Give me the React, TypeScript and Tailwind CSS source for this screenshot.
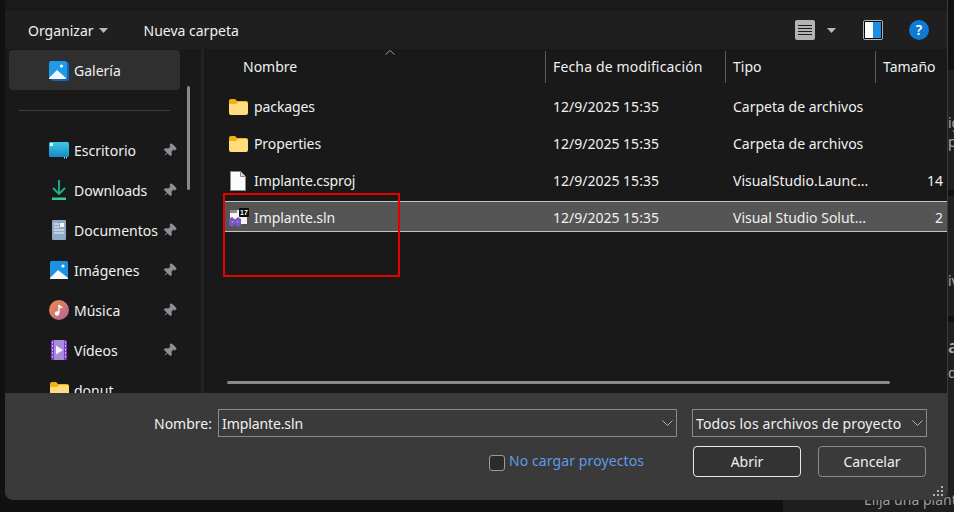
import React from 'react';
import { Pin } from 'lucide-react';

const Caret = () => (
  <svg width="9" height="5" viewBox="0 0 9 5" className="shrink-0">
    <path d="M0 0h9L4.5 5z" fill="#b8b8b8" />
  </svg>
);

const Chevron = () => (
  <svg width="11" height="6" viewBox="0 0 11 6" className="shrink-0">
    <path d="M.5.5l5 5 5-5" fill="none" stroke="#b5b5b5" />
  </svg>
);

const FolderIcon = () => (
  <svg width="19" height="16" viewBox="0 0 19 16">
    <path d="M0 2q0-2 2-2h4l2 2h9q2 0 2 2v2H0z" fill="#f4b20e" />
    <path d="M0 5h7l2-2h8q2 0 2 2v9q0 2-2 2H2q-2 0-2-2z" fill="#ffdc7d" />
  </svg>
);

const GalleryIcon = () => (
  <svg width="20" height="20" viewBox="0 0 20 20">
    <rect x="2" y="1" width="18" height="19" rx="2" fill="#1565b8" />
    <rect x="0" y="0" width="18" height="18" rx="2" fill="#1e9be8" />
    <path d="M0 17l8-8 9 8v1H0z" fill="#f2f6fa" />
    <circle cx="12.5" cy="5" r="1.6" fill="#fff" />
  </svg>
);

const DesktopIcon = () => (
  <svg width="20" height="17" viewBox="0 0 20 17">
    <defs>
      <linearGradient id="desk" x1="0" y1="0" x2="0" y2="1">
        <stop offset="0" stopColor="#43c6e8" />
        <stop offset="1" stopColor="#128cc4" />
      </linearGradient>
    </defs>
    <rect width="20" height="15" y="0" rx="1.5" fill="url(#desk)" />
    <rect x="1" y="1" width="3" height="3" fill="#e8fbff" />
    <rect x="15" y="15" width="1" height="1.5" fill="#9fdcec" />
    <rect x="17" y="15" width="1" height="1.5" fill="#9fdcec" />
  </svg>
);

const DownloadIcon = () => (
  <svg width="16" height="20" viewBox="0 0 16 20">
    <path d="M8 0v13M2 8l6 6 6-6" fill="none" stroke="#1fb58f" strokeWidth="1.8" />
    <rect x="1" y="17.5" width="14" height="2.5" fill="#36c9a0" />
  </svg>
);

const DocumentIcon = () => (
  <svg width="14" height="20" viewBox="0 0 14 20">
    <rect width="14" height="20" rx="1" fill="#8fa9c6" />
    <path d="M2 4h5M2 7h5M2 10h10M2 13h10" stroke="#f4f7fa" strokeWidth="1" />
    <rect x="8" y="3" width="4" height="4" fill="#f4f7fa" />
  </svg>
);

const PicturesIcon = () => (
  <svg width="18" height="18" viewBox="0 0 18 18">
    <rect width="18" height="18" rx="1.5" fill="#1b93e4" />
    <path d="M0 17l8-8 10 8v1H0z" fill="#f4f7fb" />
    <circle cx="13" cy="5" r="1.6" fill="#fff" />
  </svg>
);

const MusicIcon = () => (
  <svg width="20" height="20" viewBox="0 0 20 20">
    <defs>
      <linearGradient id="mus" x1="0" y1="0" x2="1" y2="1">
        <stop offset="0" stopColor="#ef8f45" />
        <stop offset="1" stopColor="#b25f9e" />
      </linearGradient>
    </defs>
    <circle cx="10" cy="10" r="10" fill="url(#mus)" />
    <path d="M10 5v8" stroke="#fff" strokeWidth="1.4" />
    <path d="M10 5q1 2.5 3.5 2.5" fill="none" stroke="#fff" strokeWidth="1.4" />
    <circle cx="8" cy="13.5" r="2.2" fill="#fff" />
  </svg>
);

const VideoIcon = () => (
  <svg width="16" height="20" viewBox="0 0 16 20">
    <rect width="16" height="20" rx="1.5" fill="#7d3fc8" />
    <rect x="3" y="0" width="10" height="20" fill="#a88bdc" />
    <path d="M5 5.5l7 4.5-7 4.5z" fill="#f4f0fb" />
    <path d="M1 2.5h1M1 6h1M1 9.5h1M1 13h1M1 16.500h1M14 2.500h1M14 6h1M14 9.500h1M14 13h1M14 16.500h1" stroke="#e4d8f6" strokeWidth="1.500" />
  </svg>
);

const FileIcon = () => (
  <svg width="16" height="20" viewBox="0 0 16 20" className="ml-[1px]">
    <path d="M.5.5h10l5 5v14H.5z" fill="#fbfbfb" stroke="#8a8a8a" />
    <path d="M10.500.5v5h5" fill="#d8d8d8" stroke="#8a8a8a" />
  </svg>
);

const SolutionIcon = () => (
  <svg width="20" height="20" viewBox="0 0 20 20">
    <rect x="1" y="2" width="17" height="14" fill="#f4f4f4" />
    <rect x="1" y="2" width="7" height="3" fill="#8a8a8a" />
    <path d="M0 11l3-2 3 2.500 3-2.500 3 2v6l-3 2-3-2.500-3 2.500-3-2z" fill="#7a55c4" />
    <circle cx="3.500" cy="14" r="1" fill="#a58fe0" />
    <circle cx="8.500" cy="14" r="1" fill="#a58fe0" />
    <rect x="10" y="0" width="10" height="9" rx="1" fill="#0a0a0a" />
    <text x="15" y="7" textAnchor="middle" fontSize="7" fontWeight="700" fill="#fff" fontFamily="Liberation Sans, sans-serif">17</text>
  </svg>
);

const PinIcon = () => (
  <Pin size={15} className="rotate-45 text-[#8b9196]" fill="currentColor" strokeWidth={1.5} />
);

const ViewIcon = () => (
  <svg width="20" height="20" viewBox="0 0 20 20">
    <rect width="20" height="20" rx="2" fill="#b3b3b3" />
    <path d="M3 5.500h14M3 8.500h14M3 11.500h14M3 14.500h14" stroke="#1c1c1c" strokeWidth="1" />
  </svg>
);

const PreviewIcon = () => (
  <svg width="20" height="20" viewBox="0 0 20 20">
    <rect x=".5" y=".5" width="19" height="19" rx="1.500" fill="#000" stroke="#b3b3b3" />
    <rect x="2" y="2" width="8" height="16" fill="#fff" />
    <rect x="10" y="2" width="8" height="16" fill="#1b8fe6" />
  </svg>
);

const HelpIcon = () => (
  <div className="flex h-5 w-5 items-center justify-center rounded-full bg-[#0f7ad6] text-[14px] font-semibold leading-none text-white">?</div>
);

const Grip = () => (
  <svg width="11" height="11" viewBox="0 0 11 11" className="absolute bottom-[3px] right-[3px]">
    <path d="M8 0h2v2H8zM4 4h2v2H4zM8 4h2v2H8zM0 8h2v2H0zM4 8h2v2H4zM8 8h2v2H8z" fill="#b0b0b0" />
  </svg>
);

const navItems = [
  { label: 'Escritorio', icon: <DesktopIcon />, pinned: true },
  { label: 'Downloads', icon: <DownloadIcon />, pinned: true },
  { label: 'Documentos', icon: <DocumentIcon />, pinned: true },
  { label: 'Imágenes', icon: <PicturesIcon />, pinned: true },
  { label: 'Música', icon: <MusicIcon />, pinned: true },
  { label: 'Vídeos', icon: <VideoIcon />, pinned: true },
  { label: 'donut', icon: <FolderIcon />, pinned: false },
];

const files = [
  { name: 'packages', date: '12/9/2025 15:35', type: 'Carpeta de archivos', size: '', icon: <FolderIcon /> },
  { name: 'Properties', date: '12/9/2025 15:35', type: 'Carpeta de archivos', size: '', icon: <FolderIcon /> },
  { name: 'Implante.csproj', date: '12/9/2025 15:35', type: 'VisualStudio.Launc...', size: '14', icon: <FileIcon /> },
  { name: 'Implante.sln', date: '12/9/2025 15:35', type: 'Visual Studio Solut...', size: '2', icon: <SolutionIcon />, selected: true },
];

const NavRow = ({ label, icon, pinned }: { label: string; icon: React.ReactNode; pinned: boolean }) => (
  <div className="flex h-10 shrink-0 items-center pl-[44px]">
    <div className="flex w-[25px] shrink-0 justify-center pr-[5px]">{icon}</div>
    <span className="w-[88px] shrink-0 whitespace-nowrap">{label}</span>
    {pinned && <PinIcon />}
  </div>
);

const FileRow = ({ file }: { file: (typeof files)[number] }) => (
  <div
    className={`grid h-[31px] shrink-0 grid-cols-[329px_180px_150px_1fr] items-center border-y pt-[2px] ${
      file.selected ? 'border-[#c4c4c4] bg-[#555555]' : 'border-transparent'
    }`}
  >
    <div className="flex items-center pl-[5px]">
      <div className="flex w-[25px] shrink-0 justify-start">{file.icon}</div>
      <span className="tracking-[-0.1px]">{file.name}</span>
    </div>
    <span>{file.date}</span>
    <span className="whitespace-nowrap">{file.type}</span>
    <span className="pr-[4px] text-right">{file.size}</span>
  </div>
);

const App: React.FC = () => {
  return (
    <div className="flex h-[512px] w-[954px] flex-col overflow-hidden bg-[#111111] font-['Noto_Sans',sans-serif] text-[14px] text-[#f0f0f0]">
      <div className="flex h-[500px] shrink-0 pl-[5px]">
        {/* dialogo */}
        <div className="relative z-10 flex w-[943px] flex-col overflow-hidden rounded-b-lg border-r border-[#3c3c3c] bg-[#191919]">
          <div className="h-[11px] shrink-0 bg-[#1a1a1a]" />
          <div className="flex h-[38px] shrink-0 items-center bg-[#1f1f1f] pl-[23px] pr-[18px]">
            <span>Organizar</span>
            <div className="ml-[5px]"><Caret /></div>
            <span className="ml-[36px]">Nueva carpeta</span>
            <div className="ml-auto"><ViewIcon /></div>
            <div className="ml-[12px]"><Caret /></div>
            <div className="ml-[27px]"><PreviewIcon /></div>
            <div className="ml-[26px]"><HelpIcon /></div>
          </div>

          <div className="flex min-h-0 flex-1">
            <aside className="relative flex w-[199px] shrink-0 flex-col overflow-hidden border-r-[3px] border-[#232323] pl-[4px] pr-[21px]">
              <div className="mt-px flex h-10 shrink-0 items-center rounded bg-[#2f2f2f] pl-[40px] pt-px">
                <GalleryIcon />
                <span className="ml-[5px]">Galería</span>
              </div>
              <div className="ml-[10px] mr-[10px] mt-[20px] h-px shrink-0 bg-[#3d3d3d]" />
              <div className="-ml-[4px] -mr-[21px] mt-[19px] flex flex-col">
                {navItems.map((item) => (
                  <NavRow key={item.label} {...item} />
                ))}
              </div>
              <div className="absolute right-[11px] top-[37px] h-[104px] w-[3px] rounded bg-[#8a8a8a]" />
            </aside>

            <main className="flex min-w-0 flex-1 flex-col pl-[19px]">
              <div className="relative grid h-[36px] shrink-0 grid-cols-[322px_180px_150px_1fr] items-center pb-[1px]">
                <div className="pl-[20px]">Nombre</div>
                <div className="flex h-[32px] items-center whitespace-nowrap border-l border-[#5c5c5c] pl-[7px] tracking-[0.15px]">Fecha de modificación</div>
                <div className="flex h-[32px] items-center border-l border-[#5c5c5c] pl-[7px]">Tipo</div>
                <div className="flex h-[32px] items-center border-l border-[#5c5c5c] pl-[7px]">Tamaño</div>
                <svg width="10" height="5" viewBox="0 0 10 5" className="absolute left-[162px] top-[1px]">
                  <path d="M.5 4.500l4.500-4 4.500 4" fill="none" stroke="#9a9a9a" />
                </svg>
              </div>
              <div className="mt-[5px] flex flex-col gap-[6px] pl-[1px]">
                {files.map((file) => (
                  <FileRow key={file.name} file={file} />
                ))}
              </div>
              <div className="ml-[4px] mr-[57px] mt-[149px] h-[3px] shrink-0 rounded bg-[#8a8a8a]" />
            </main>
          </div>

          <div className="relative flex h-[107px] shrink-0 flex-col bg-[#3a3a3a]">
            <div className="mt-[16px] flex items-center pl-[149px]">
              <span className="w-[64px]">Nombre:</span>
              <div className="flex h-[28px] w-[459px] items-center justify-between border border-[#8a8a8a] pl-[3px] pr-[3px]">
                <span className="tracking-[-0.1px]">Implante.sln</span>
                <Chevron />
              </div>
              <div className="ml-[15px] flex h-[28px] w-[235px] items-center justify-between border border-[#8a8a8a] pl-[3px] pr-[3px]">
                <span className="whitespace-nowrap tracking-[0.14px]">Todos los archivos de proyecto</span>
                <Chevron />
              </div>
            </div>
            <div className="mt-[9px] flex items-center pl-[484px]">
              <div className="mt-[3px] h-4 w-4 rounded-[3px] border border-[#9a9a9a] bg-[#2b2b2b]" />
              <span className="mb-[2px] ml-[4px] w-[184px] whitespace-nowrap tracking-[0.1px] text-[#5f9be8]">No cargar proyectos</span>
              <button className="h-[31px] w-[108px] rounded border border-[#e8e8e8] bg-[#333333]">Abrir</button>
              <button className="ml-[17px] h-[31px] w-[108px] rounded border border-[#8a8a8a] bg-[#3a3a3a]">Cancelar</button>
            </div>
            <Grip />
          </div>

          {/* marca de seleccion */}
          <div className="pointer-events-none absolute left-[218px] top-[193px] h-[84px] w-[177px] border-2 border-[#e60000]" />
        </div>

        {/* ventana de detras */}
        <div className="flex w-[6px] shrink-0 flex-col overflow-hidden whitespace-nowrap text-[14px] leading-none text-[#a9a9a9]">
          <div className="h-[70px] shrink-0 bg-[#111111]" />
          <div className="flex h-[120px] shrink-0 flex-col bg-[#1f1f1f] pt-[46px]">
            <span>ig</span>
            <span className="mt-[5px]">p</span>
          </div>
          <div className="h-[6px] shrink-0 bg-[#111111]" />
          <div className="h-[120px] shrink-0 bg-[#1f1f1f] pt-[78px]">
            <span>iv</span>
          </div>
          <div className="h-[6px] shrink-0 bg-[#111111]" />
          <div className="flex flex-1 flex-col bg-[#1f1f1f] pt-[15px]">
            <span className="text-[18px] font-semibold">a</span>
            <span className="mt-[11px]">di</span>
          </div>
        </div>
      </div>

      <div className="-mt-[8px] flex h-[20px] shrink-0">
        <div className="w-[783px] shrink-0 bg-[#111111]" />
        <div className="flex-1 overflow-hidden whitespace-nowrap bg-[#1f1f1f] pl-[81px] text-[14px] leading-[16px] text-[#9c9c9c]">Elija una plantilla</div>
      </div>
    </div>
  );
};

export default App;
